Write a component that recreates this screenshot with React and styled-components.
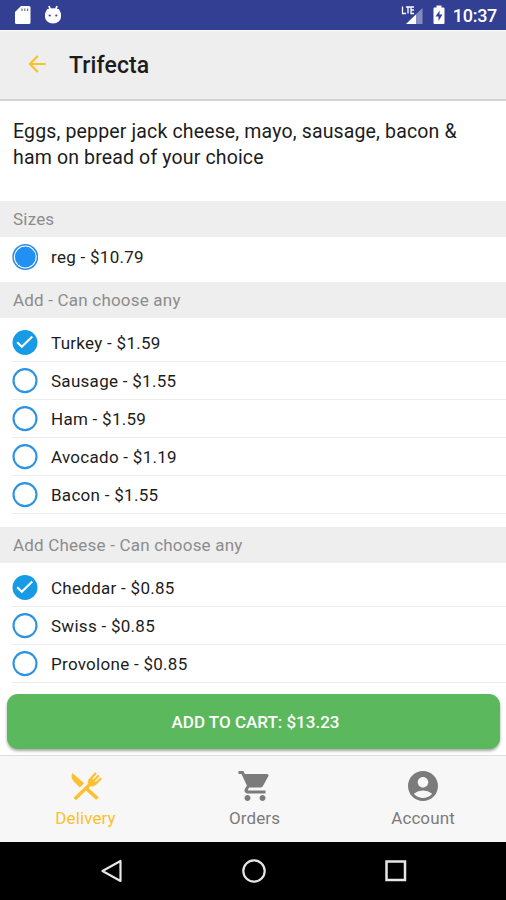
import React from 'react';
import styled, { createGlobalStyle } from 'styled-components';
import { MdArrowBack, MdShoppingCart, MdAccountCircle } from 'react-icons/md';

const GlobalStyle = createGlobalStyle`
	* {
		box-sizing: border-box;
	}

	body {
		margin: 0;
		background: #fff;
		font-family: Roboto, sans-serif;
	}
`;

const Screen = styled.div`
	display: flex;
	flex-direction: column;
	width: 506px;
	height: 900px;
	overflow: hidden;
	color: #1c1c1c;
	background: #fff;
`;

const StatusBar = styled.div`
	display: flex;
	flex: none;
	align-items: center;
	height: 30px;
	padding: 0 9px 0 14px;
	color: #fff;
	background: #323f92;
`;

const StatusIcons = styled.div`
	display: flex;
	align-items: center;
	gap: ${(props) => props.$gap}px;
`;

const Clock = styled.span`
	margin-left: 8px;
	font-size: 18px;
	font-weight: 500;
	line-height: 30px;
	letter-spacing: -0.3px;
	padding-top: 2px;
`;

const Spacer = styled.div`
	flex: 1;
`;

const Header = styled.header`
	display: flex;
	flex: none;
	align-items: center;
	height: 71px;
	padding-left: 24px;
	background: #eee;
	border-top: 1px solid #fafafa;
	border-bottom: 2px solid #d4d4d4;
`;

const BackButton = styled.span`
	display: flex;
	margin: 0 19px 2px 0;
	color: #fcc02c;
`;

const Title = styled.h1`
	margin: 0;
	padding-top: 2px;
	font-size: 23px;
	font-weight: 500;
	line-height: 30px;
	letter-spacing: 0.1px;
`;

const Description = styled.p`
	flex: none;
	height: 100px;
	margin: 0;
	padding: 18px 12px 0 13px;
	font-size: 19.5px;
	line-height: 26px;
	letter-spacing: 0.15px;
`;

const SectionTitle = styled.h2`
	flex: none;
	height: 36px;
	margin: 0;
	padding-left: 13px;
	font-size: 17px;
	font-weight: 400;
	line-height: 37px;
	letter-spacing: 0.2px;
	color: #8c8c8c;
	background: #eee;
`;

const OptionList = styled.div`
	flex: none;
	height: ${(props) => props.$height}px;
	padding: ${(props) => props.$top}px 0 0 12px;
`;

const Option = styled.div`
	display: flex;
	align-items: center;
	gap: 13px;
	height: ${(props) => (props.$divided ? '38px' : '39px')};
	border-bottom: ${(props) => (props.$divided ? '1px solid #ededed' : 'none')};
`;

const OptionLabel = styled.span`
	font-size: 17px;
	line-height: 24px;
	letter-spacing: 0.28px;
`;

const CartArea = styled.div`
	flex: none;
	height: 66px;
	padding: 5px 6px 6px 7px;
`;

const CartButton = styled.button`
	display: block;
	width: 100%;
	height: 55px;
	padding: 0 0 0 4px;
	border: 0;
	border-radius: 11px;
	color: #fff;
	background: #5bb85c;
	box-shadow: 0 2px 3px rgba(0, 0, 0, 0.35);
	font-family: inherit;
	font-size: 17px;
	font-weight: 500;
`;

const TabBar = styled.nav`
	display: grid;
	flex: none;
	grid-template-columns: 169px 169px 168px;
	height: 87px;
	padding-left: 1px;
	background: #f7f7f7;
	border-top: 1px solid #dedede;
`;

const Tab = styled.div`
	display: flex;
	flex-direction: column;
	align-items: center;
	padding-top: 12px;
	color: ${(props) => (props.$active ? '#fcc02c' : '#7b7b7b')};
`;

const TabLabel = styled.span`
	font-size: 17px;
	line-height: 22px;
	margin-top: 3px;
	letter-spacing: 0.1px;
`;

const NavBar = styled.div`
	display: flex;
	flex: none;
	justify-content: space-between;
	height: 58px;
	padding: 16px 98px 0 99px;
	background: #000;
`;

const sizes = [{ name: 'reg', price: '$10.79' }];

const addOns = [
	{ name: 'Turkey', price: '$1.59', checked: true },
	{ name: 'Sausage', price: '$1.55' },
	{ name: 'Ham', price: '$1.59' },
	{ name: 'Avocado', price: '$1.19' },
	{ name: 'Bacon', price: '$1.55' },
];

const cheeses = [
	{ name: 'Cheddar', price: '$0.85', checked: true },
	{ name: 'Swiss', price: '$0.85' },
	{ name: 'Provolone', price: '$0.85' },
];

function SdCardIcon() {
	return (
		<svg width="18" height="20" viewBox="0 0 18 20">
			<path
				d="M7 1h8a1.5 1.5 0 0 1 1.5 1.5v15A1.5 1.5 0 0 1 15 19H2.5A1.5 1.5 0 0 1 1 17.5V7z"
				fill="#fff"
			/>
			<path d="M8 3.5V6M10.8 3.5V6M13.6 3.5V6" stroke="#323f92" strokeWidth="1.3" opacity="0.7" />
		</svg>
	);
}

function DroidIcon() {
	return (
		<svg width="18" height="20" viewBox="0 0 18 20">
			<path d="M5 1l1.500 4M13 1l-1.500 4" stroke="#fff" strokeWidth="1.8" />
			<path
				d="M3 4.200Q9 2.500 15 4.200L17 8.500v3C17 15.500 13.500 18.500 9 18.500S1 15.500 1 11.500v-3z"
				fill="#fff"
			/>
			<circle cx="5.700" cy="10.500" r="1.100" fill="#323f92" />
			<circle cx="12.300" cy="10.500" r="1.100" fill="#323f92" />
		</svg>
	);
}

function SignalIcon() {
	return (
		<svg width="22" height="20" viewBox="0 0 22 20">
			<path d="M21.500 3v16H5z" fill="#fff" opacity="0.4" />
			<path d="M15 9.500v9.500H5z" fill="#fff" />
			<path d="M1.500 1.500v7H5M5 2h4.500M7 2v6.500M13 2h-3v6.500h3M10 5h3" fill="none" stroke="#fff" strokeWidth="1.3" />
		</svg>
	);
}

function BatteryIcon() {
	return (
		<svg width="12" height="20" viewBox="0 0 12 20">
			<path
				d="M3.500 0.500h5v2h2a1 1 0 0 1 1 1V18a1 1 0 0 1-1 1h-9a1 1 0 0 1-1-1V3.500a1 1 0 0 1 1-1h2z"
				fill="#fff"
			/>
			<path d="M6.500 5.500l-4 6h3v4.500l4-6.500h-3z" fill="#323f92" />
		</svg>
	);
}

function RadioMark() {
	return (
		<svg width="26" height="26" viewBox="0 0 26 26">
			<circle cx="13.300" cy="13" r="12.200" fill="#fff" stroke="#2b8ce6" strokeWidth="1.5" />
			<circle cx="13.300" cy="13" r="10.400" fill="#2090f2" />
		</svg>
	);
}

function CheckMark({ checked }) {
	return (
		<svg width="26" height="26" viewBox="0 0 26 26">
			{checked ? (
				<>
					<circle cx="13" cy="12.500" r="12.500" fill="#179be6" />
					<path d="M5.200 12.300l4.600 4.500L20.300 6.600" fill="none" stroke="#fff" strokeWidth="2.1" />
				</>
			) : (
				<circle cx="13" cy="12.600" r="11.500" fill="none" stroke="#2b92e4" strokeWidth="2.1" />
			)}
		</svg>
	);
}

function CutleryIcon() {
	return (
		<svg width="36" height="36" viewBox="0 0 36 36">
			<g fill="currentColor" stroke="currentColor" strokeWidth="0.6">
				<path d="M4.500 5.500L15.800 15.200l-4 4-5.700-5.700C3.700 11 3.300 8.200 4.500 5.500z" />
				<path d="M19 19l11.300 10.300-2.100 2.300-11.400-10.400z" />
				<path d="M5.800 29.800L20.500 15.800c-.9-2-.2-3.800 1-5l5.700-6.300 1.300 1.200-4.500 5 1.200 1.100 4.800-4.700 1.200 1.200-4.800 4.800 1.200 1.200 4.900-4.500 1.200 1.300-6 5.600c-1.500 1.400-3.300 1.800-5 1.100L7.900 31.900z" />
			</g>
		</svg>
	);
}

function OptionRow({ item, radio }) {
	return (
		<Option $divided={!radio}>
			{radio ? <RadioMark /> : <CheckMark checked={item.checked} />}
			<OptionLabel>
				{item.name} - {item.price}
			</OptionLabel>
		</Option>
	);
}

export default function App() {
	return (
		<Screen>
			<GlobalStyle />
			<StatusBar>
				<StatusIcons $gap={12}>
					<SdCardIcon />
					<DroidIcon />
				</StatusIcons>
				<Spacer />
				<StatusIcons $gap={10}>
					<SignalIcon />
					<BatteryIcon />
				</StatusIcons>
				<Clock>10:37</Clock>
			</StatusBar>
			<Header>
				<BackButton>
					<MdArrowBack size={26} />
				</BackButton>
				<Title>Trifecta</Title>
			</Header>
			<Description>
				Eggs, pepper jack cheese, mayo, sausage, bacon &amp; ham on bread of your choice
			</Description>
			<SectionTitle>Sizes</SectionTitle>
			<OptionList $height={45} $top={0}>
				{sizes.map((item) => (
					<OptionRow key={item.name} item={item} radio />
				))}
			</OptionList>
			<SectionTitle>Add - Can choose any</SectionTitle>
			<OptionList $height={209} $top={6}>
				{addOns.map((item) => (
					<OptionRow key={item.name} item={item} />
				))}
			</OptionList>
			<SectionTitle>Add Cheese - Can choose any</SectionTitle>
			<OptionList $height={126} $top={6}>
				{cheeses.map((item) => (
					<OptionRow key={item.name} item={item} />
				))}
			</OptionList>
			<CartArea>
				<CartButton>ADD TO CART: $13.23</CartButton>
			</CartArea>
			<TabBar>
				<Tab $active>
					<CutleryIcon />
					<TabLabel>Delivery</TabLabel>
				</Tab>
				<Tab>
					<MdShoppingCart size={36} />
					<TabLabel>Orders</TabLabel>
				</Tab>
				<Tab>
					<MdAccountCircle size={36} />
					<TabLabel>Account</TabLabel>
				</Tab>
			</TabBar>
			<NavBar>
				<svg width="26" height="26" viewBox="0 0 26 26">
					<path d="M21.500 3v20L3.500 13z" fill="none" stroke="#e6e6e6" strokeWidth="2.2" strokeLinejoin="round" />
				</svg>
				<svg width="26" height="26" viewBox="0 0 26 26">
					<circle cx="13" cy="13" r="10.700" fill="none" stroke="#e6e6e6" strokeWidth="2.2" />
				</svg>
				<svg width="26" height="26" viewBox="0 0 26 26">
					<rect x="4.500" y="3.500" width="18.500" height="18.500" fill="none" stroke="#e6e6e6" strokeWidth="2.5" />
				</svg>
			</NavBar>
		</Screen>
	);
}
